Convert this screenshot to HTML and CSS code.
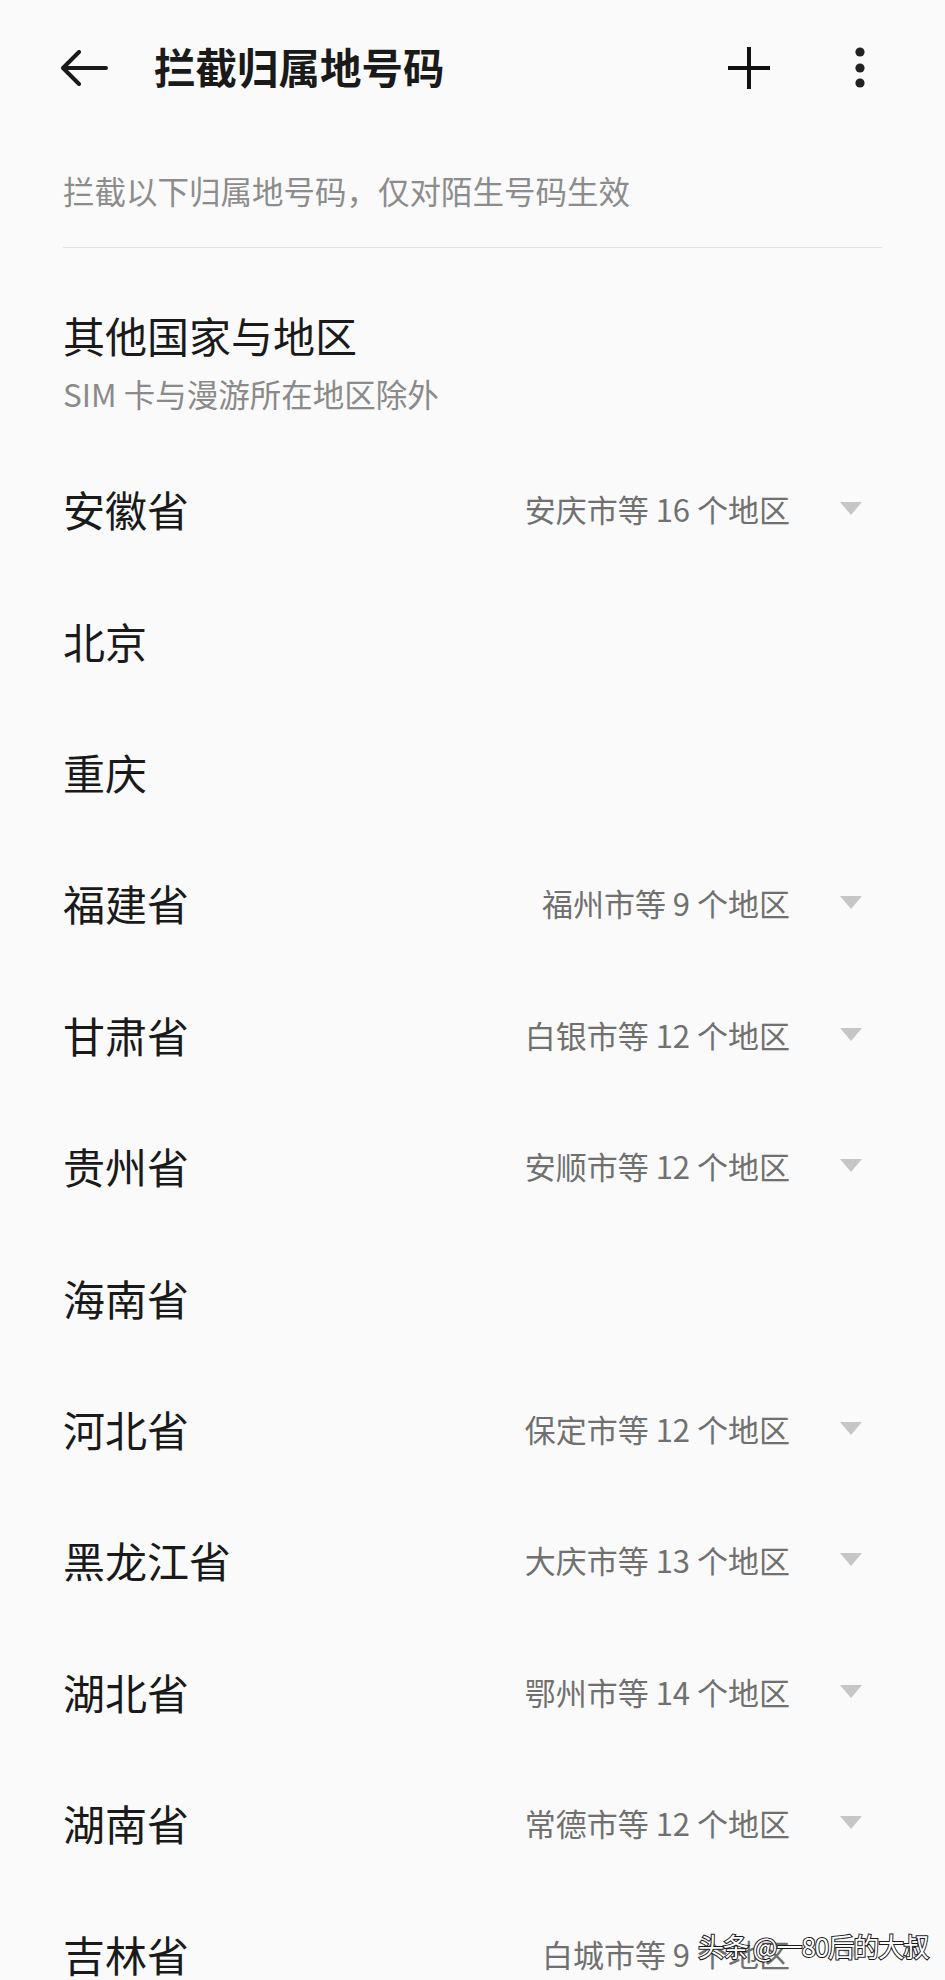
FILE: index.html
```html
<!DOCTYPE html>
<html lang="zh-CN">
<head>
<meta charset="utf-8">
<title>拦截归属地号码</title>
<link rel="stylesheet" href="styles.css">
</head>
<body>
<div class="page">
  <header class="topbar">
    <svg class="back" width="48" height="36" viewBox="0 0 48 36"><path d="M46 18H3M19 2L3 18L19 34" fill="none" stroke="#1a1a1a" stroke-width="4" stroke-linecap="round" stroke-linejoin="round"/></svg>
    <h1 class="title">拦截归属地号码</h1>
    <svg class="plus" width="44" height="44" viewBox="0 0 44 44"><path d="M22 1V43M1 22H43" fill="none" stroke="#111" stroke-width="4"/></svg>
    <svg class="more" width="12" height="42" viewBox="0 0 12 42"><circle cx="6" cy="5" r="4.6" fill="#222"/><circle cx="6" cy="21" r="4.6" fill="#222"/><circle cx="6" cy="36" r="4.6" fill="#222"/></svg>
  </header>

  <main class="content">
    <p class="note">拦截以下归属地号码，仅对陌生号码生效</p>

    <section class="other">
      <div class="other-title">其他国家与地区</div>
      <div class="other-sub">SIM 卡与漫游所在地区除外</div>
    </section>

    <ul class="list">
      <li class="row"><span class="name">安徽省</span><span class="meta">安庆市等 16 个地区</span><span class="caret"></span></li>
      <li class="row"><span class="name">北京</span></li>
      <li class="row"><span class="name">重庆</span></li>
      <li class="row"><span class="name">福建省</span><span class="meta">福州市等 9 个地区</span><span class="caret"></span></li>
      <li class="row"><span class="name">甘肃省</span><span class="meta">白银市等 12 个地区</span><span class="caret"></span></li>
      <li class="row"><span class="name">贵州省</span><span class="meta">安顺市等 12 个地区</span><span class="caret"></span></li>
      <li class="row"><span class="name">海南省</span></li>
      <li class="row"><span class="name">河北省</span><span class="meta">保定市等 12 个地区</span><span class="caret"></span></li>
      <li class="row"><span class="name">黑龙江省</span><span class="meta">大庆市等 13 个地区</span><span class="caret"></span></li>
      <li class="row"><span class="name">湖北省</span><span class="meta">鄂州市等 14 个地区</span><span class="caret"></span></li>
      <li class="row"><span class="name">湖南省</span><span class="meta">常德市等 12 个地区</span><span class="caret"></span></li>
      <li class="row"><span class="name">吉林省</span><span class="meta">白城市等 9 个地区</span><span class="caret"></span></li>
    </ul>
  </main>

  <div class="watermark">头条 @一80后的大叔</div>
</div>
</body>
</html>
```

FILE: styles.css
```css
html, body {
  margin: 0;
  padding: 0;
  height: 1980px;
  overflow: hidden;
  background: #fafafa;
}

body {
  font-family: "Noto Sans CJK SC", "Noto Sans", "Liberation Sans", sans-serif;
  color: #1a1a1a;
}

.page {
  position: relative;
  height: 1980px;
  overflow: hidden;
}

.topbar {
  height: 136px;
  display: flex;
  align-items: center;
  padding: 0 0 0 60px;
}

.back {
  flex: none;
}

.title {
  margin: -3px 0 0 46px;
  font-size: 41.5px;
  font-weight: 700;
  line-height: 1;
  color: #1a1a1a;
  flex: 1;
}

.plus {
  flex: none;
  margin-right: 83px;
}

.more {
  flex: none;
  margin-right: 79px;
}

.content {
  padding: 0 63px;
}

.note {
  margin: 0;
  padding-top: 32px;
  padding-bottom: 35px;
  font-size: 31.5px;
  line-height: 44px;
  color: #8c8c8c;
  border-bottom: 1px solid #e2e2e2;
}

.other {
  padding-top: 59px;
  padding-bottom: 30px;
}

.other-title {
  font-size: 42px;
  line-height: 56px;
  color: #1a1a1a;
}

.other-sub {
  margin-top: 10px;
  font-size: 31.5px;
  line-height: 40px;
  color: #8a8a8a;
}

.list {
  list-style: none;
  margin: 0;
  padding: 0;
}

.row {
  height: 131.4px;
  display: flex;
  align-items: center;
  padding-right: 20px;
}

.name {
  flex: 1;
  font-size: 42px;
  color: #1a1a1a;
}

.meta {
  font-size: 31px;
  color: #707070;
}

.caret {
  width: 0;
  height: 0;
  margin-left: 50px;
  border-left: 11px solid transparent;
  border-right: 11px solid transparent;
  border-top: 13px solid #c6c6c6;
}

.watermark {
  position: absolute;
  left: 698px;
  top: 1929px;
  font-size: 26px;
  line-height: 34px;
  color: #ffffff;
  -webkit-text-stroke: 2px #1a1a1a;
  paint-order: stroke fill;
  letter-spacing: -1px;
}
```
